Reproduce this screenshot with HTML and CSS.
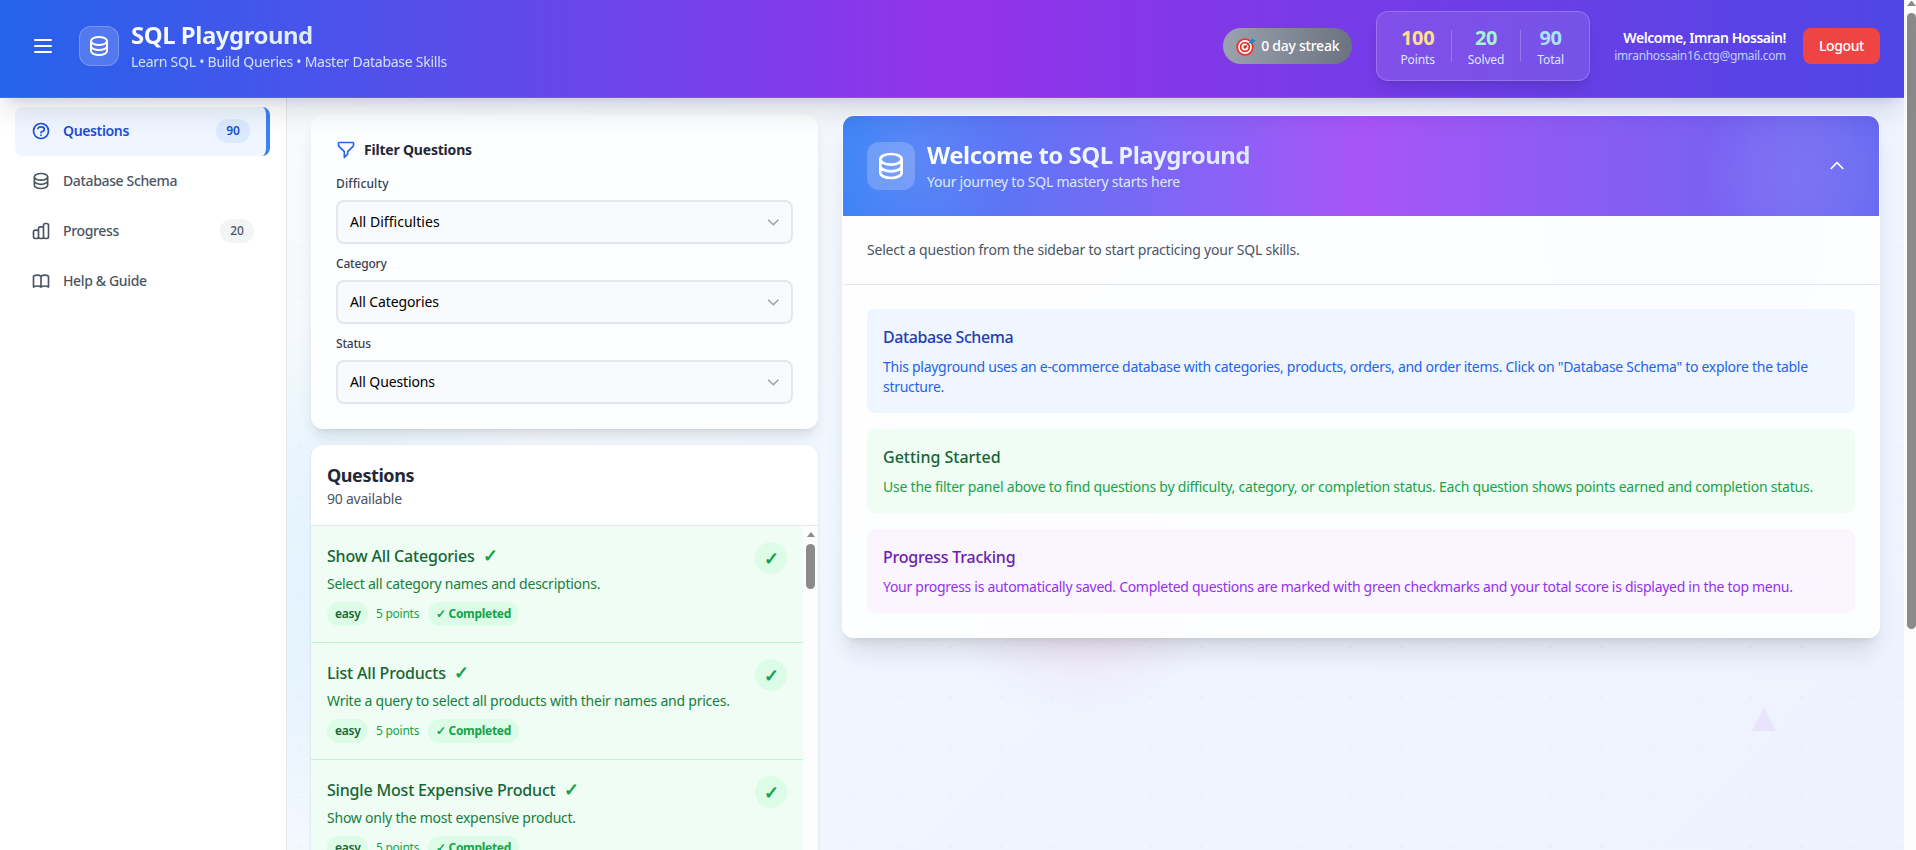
FILE: index.html
```html
<!DOCTYPE html>
<html lang="en">
<head>
<meta charset="utf-8">
<title>SQL Playground</title>
<link rel="stylesheet" href="styles.css">
</head>
<body>
<svg width="0" height="0" class="defs">
  <symbol id="db" viewBox="0 0 24 24"><path d="M4 7v10c0 2.21 3.582 4 8 4s8-1.79 8-4V7M4 7c0 2.21 3.582 4 8 4s8-1.79 8-4M4 7c0-2.21 3.582-4 8-4s8 1.79 8 4m0 5c0 2.21-3.582 4-8 4s-8-1.79-8-4"/></symbol>
  <symbol id="down" viewBox="0 0 20 20"><path d="M5.5 8l4.8 4.8L15 8"/></symbol>
</svg>
<div class="app">
  <div class="page">
    <header class="top">
      <svg class="icon menu" viewBox="0 0 24 24"><path d="M4 6h16M4 12h16M4 18h16"/></svg>
      <div class="logo"><svg class="icon i24"><use href="#db"/></svg></div>
      <div class="brand">
        <h1>SQL Playground</h1>
        <p>Learn SQL • Build Queries • Master Database Skills</p>
      </div>
      <div class="streak">
        <svg class="target" viewBox="0 0 20 20"><circle cx="9" cy="11" r="8.8" fill="#e8362c"/><circle cx="9" cy="11" r="6.9" fill="#fff"/><circle cx="9" cy="11" r="5.3" fill="#e8362c"/><circle cx="9" cy="11" r="3.4" fill="#fff"/><circle cx="9" cy="11" r="1.8" fill="#e8362c"/><path d="M9 11l6-6" stroke="#8a4a2b" stroke-width="1"/><path d="M13.8 7.4l.2-2.6L17 2l.6 1.8 2 .6L16.6 7.2z" fill="#1b87c9"/></svg>
        <span>0 day streak</span>
      </div>
      <div class="stats">
        <div class="stat gold"><b>100</b><span>Points</span></div>
        <div class="stat mint"><b>20</b><span>Solved</span></div>
        <div class="stat sky"><b>90</b><span>Total</span></div>
      </div>
      <div class="user"><b>Welcome, Imran Hossain!</b><span>imranhossain16.ctg@gmail.com</span></div>
      <button class="logout">Logout</button>
    </header>
    <div class="body">
      <nav class="side">
        <a class="item active"><svg class="icon i20" viewBox="0 0 24 24"><path d="M8.228 9c.549-1.165 2.03-2 3.772-2 2.21 0 4 1.343 4 3 0 1.4-1.278 2.575-3.006 2.907-.542.104-.994.54-.994 1.093m0 3h.01M21 12a9 9 0 11-18 0 9 9 0 0118 0z"/></svg><span>Questions</span><em>90</em></a>
        <a class="item"><svg class="icon i20"><use href="#db"/></svg><span>Database Schema</span></a>
        <a class="item"><svg class="icon i20" viewBox="0 0 24 24"><path d="M9 19v-6a2 2 0 00-2-2H5a2 2 0 00-2 2v6a2 2 0 002 2h2a2 2 0 002-2zm0 0V9a2 2 0 012-2h2a2 2 0 012 2v10m-6 0a2 2 0 002 2h2a2 2 0 002-2m0 0V5a2 2 0 012-2h2a2 2 0 012 2v14a2 2 0 01-2 2h-2a2 2 0 01-2-2z"/></svg><span>Progress</span><em>20</em></a>
        <a class="item"><svg class="icon i20" viewBox="0 0 24 24"><path d="M12 6.253v13m0-13C10.832 5.477 9.246 5 7.5 5S4.168 5.477 3 6.253v13C4.168 18.477 5.754 18 7.5 18s3.332.477 4.5 1.253m0-13C13.168 5.477 14.754 5 16.5 5c1.747 0 3.332.477 4.5 1.253v13C19.832 18.477 18.247 18 16.5 18c-1.746 0-3.332.477-4.5 1.253"/></svg><span>Help &amp; Guide</span></a>
      </nav>
      <main class="canvas">
        <i class="glow lilac"></i><i class="glow pink"></i><i class="ring"></i>
        <svg class="tri" viewBox="0 0 24 24"><path d="M12 0l12 24H0z"/></svg>
        <div class="left">
          <section class="filter">
            <h2><svg class="icon i20" viewBox="0 0 24 24"><path d="M3 4a1 1 0 011-1h16a1 1 0 011 1v2.586a1 1 0 01-.293.707l-6.414 6.414a1 1 0 00-.293.707V17l-4 4v-6.586a1 1 0 00-.293-.707L3.293 7.293A1 1 0 013 6.586V4z"/></svg>Filter Questions</h2>
            <label>Difficulty</label>
            <div class="select diff"><span>All Difficulties</span><svg><use href="#down"/></svg></div>
            <label class="cat">Category</label>
            <div class="select"><span>All Categories</span><svg><use href="#down"/></svg></div>
            <label class="cat">Status</label>
            <div class="select"><span>All Questions</span><svg><use href="#down"/></svg></div>
          </section>
          <section class="questions">
            <div class="qhead"><h2>Questions</h2><p>90 available</p></div>
            <div class="qbody">
              <div class="list">
                <article><div><h3>Show All Categories <i>✓</i></h3><p>Select all category names and descriptions.</p><div class="tags"><b>easy</b><span>5 points</span><strong>✓ Completed</strong></div></div><div class="tick">✓</div></article>
                <article><div><h3>List All Products <i>✓</i></h3><p>Write a query to select all products with their names and prices.</p><div class="tags"><b>easy</b><span>5 points</span><strong>✓ Completed</strong></div></div><div class="tick">✓</div></article>
                <article><div><h3>Single Most Expensive Product <i>✓</i></h3><p>Show only the most expensive product.</p><div class="tags"><b>easy</b><span>5 points</span><strong>✓ Completed</strong></div></div><div class="tick">✓</div></article>
              </div>
              <div class="track"><i class="arrow"></i><i class="thumb"></i></div>
            </div>
          </section>
        </div>
        <section class="welcome">
          <div class="hero">
            <div class="herobox"><svg class="icon i32"><use href="#db"/></svg></div>
            <div class="herotext"><h2>Welcome to SQL Playground</h2><p>Your journey to SQL mastery starts here</p></div>
            <svg class="icon i20 up" viewBox="0 0 24 24"><path d="M5 15l7-7 7 7"/></svg>
          </div>
          <p class="intro">Select a question from the sidebar to start practicing your SQL skills.</p>
          <div class="notes">
            <div class="note blue"><h3>Database Schema</h3><p>This playground uses an e-commerce database with categories, products, orders, and order items. Click on "Database Schema" to explore the table structure.</p></div>
            <div class="note green"><h3>Getting Started</h3><p>Use the filter panel above to find questions by difficulty, category, or completion status. Each question shows points earned and completion status.</p></div>
            <div class="note purple"><h3>Progress Tracking</h3><p>Your progress is automatically saved. Completed questions are marked with green checkmarks and your total score is displayed in the top menu.</p></div>
          </div>
        </section>
      </main>
    </div>
  </div>
  <div class="scroll"><i class="arrow"></i><i class="thumb"></i></div>
</div>
</body>
</html>
```
FILE: styles.css
```css
* { box-sizing: border-box; margin: 0; padding: 0; }
body { height: 850px; overflow: hidden; font: 400 14px/20px "Noto Sans", "Open Sans", sans-serif; letter-spacing: -0.23px; color: #1f2937; }
.defs { display: none; }
i, em { font-style: normal; }
.app { display: flex; height: 850px; overflow: hidden; }
.page { width: 1904px; display: flex; flex-direction: column; }
.icon { fill: none; stroke: currentColor; stroke-width: 2; stroke-linecap: round; stroke-linejoin: round; flex: none; }
.i20 { width: 20px; height: 20px; }
.i24 { width: 24px; height: 24px; }
.i32 { width: 32px; height: 32px; }

/* Header */
.top { position: relative; z-index: 5; height: 98px; flex: none; display: flex; align-items: center; padding: 0 24px 5px 31px; color: #fff; background: linear-gradient(90deg, #2563eb, #9333ea 50%, #4f46e5); border-bottom: 1px solid rgba(255,255,255,.1); background-origin: border-box; box-shadow: 0 20px 25px -5px rgba(0,0,0,.1), 0 8px 10px -6px rgba(0,0,0,.1); }
.menu { width: 24px; height: 24px; }
.logo { width: 40px; height: 40px; margin: 0 12px 0 24px; display: flex; align-items: center; justify-content: center; border-radius: 12px; border: 1px solid rgba(255,255,255,.22); background: rgba(255,255,255,.17); }
.brand { flex: 1; margin-top: -1px; }
.brand h1 { font-size: 24px; line-height: 32px; letter-spacing: -.5px; margin-bottom: 1px; background: linear-gradient(90deg, #fff, #dbeafe) 0 0 / 190px 100%; -webkit-background-clip: text; background-clip: text; color: transparent; }
.brand p { color: #dbeafe; letter-spacing: -.26px; opacity: .93; }
.streak { width: 129px; height: 36px; display: flex; align-items: center; padding-left: 13px; gap: 5px; border-radius: 18px; background: linear-gradient(90deg, #9ca3af, #6b7280); font-weight: 500; letter-spacing: -.25px; }
.target { width: 20px; height: 20px; flex: none; }
.stats { width: 214px; height: 70px; margin: 0 24px; display: flex; justify-content: center; align-items: center; border: 1px solid rgba(255,255,255,.2); border-radius: 12px; background: rgba(255,255,255,.1); box-shadow: 0 10px 15px -3px rgba(0,0,0,.1), 0 4px 6px -4px rgba(0,0,0,.1); }
.stat { display: flex; flex-direction: column; align-items: center; position: relative; right: 1px; }
.stat + .stat { margin-left: 33px; }
.stat + .stat::before { content: ""; position: absolute; left: -17px; top: 6px; width: 1px; height: 32px; background: rgba(255,255,255,.22); }
.stat b { font-size: 20px; line-height: 28px; letter-spacing: -.3px; }
.stat span { font-size: 12px; line-height: 16px; letter-spacing: -.12px; color: #dbeafe; }
.gold b { color: #fde08f; }
.mint b { color: #a7f3d0; }
.sky b { color: #a9e3fb; }
.user { display: flex; flex-direction: column; align-items: flex-end; margin-right: 17px; }
.user b { font-weight: 600; letter-spacing: -.46px; }
.user span { font-size: 12px; line-height: 16px; letter-spacing: -.32px; color: #bfd0fe; }
.logout { width: 77px; height: 36px; border: 0; border-radius: 8px; background: #ef4444; color: #fff; font: 500 14px/20px "Noto Sans", sans-serif; letter-spacing: -.36px; }

/* Sidebar */
.body { flex: 1; display: flex; min-height: 0; }
.side { width: 287px; flex: none; background: #fff; border-right: 1px solid #e5e7eb; padding: 9px 16px 0 15px; display: flex; flex-direction: column; gap: 2px; }
.item { height: 48px; flex: none; display: flex; align-items: center; padding: 0 16px; border-radius: 8px; color: #4b5563; font-weight: 550; letter-spacing: -.36px; }
.item span { flex: 1; margin-left: 12px; }
.item em { height: 24px; width: 34px; text-align: center; border-radius: 12px; background: #f3f4f6; font-size: 12px; line-height: 24px; letter-spacing: 0; }
.active { height: 49px; margin-bottom: -1px; padding-bottom: 2px; border-right: 4px solid #3b82f6; background: #eff6ff; color: #1d4ed8; font-weight: 600; }
.active em { background: #dbeafe; }

/* Content canvas */
.canvas { position: relative; flex: 1; overflow: hidden; display: flex; align-items: flex-start; gap: 24px; padding: 17px 24px 0;
  background: radial-gradient(circle at 14px 49px, rgba(99,102,241,.06) 0 1px, transparent 1.5px) 0 0 / 50px 50px,
    radial-gradient(circle 260px at 20px 480px, rgba(186,230,253,.28), rgba(186,230,253,.2) 50%, transparent),
    linear-gradient(135deg, #f8fafc, #eff6ff 50%, #eef2ff); }
.left { width: 507px; flex: none; position: relative; display: flex; flex-direction: column; gap: 16px; }
.glow { position: absolute; border-radius: 50%; }
.lilac { left: 1258px; top: 2px; width: 280px; height: 280px; background: linear-gradient(transparent 40px, rgba(165,180,252,.14) 100px); }
.pink { left: 655px; top: 346px; width: 280px; height: 280px; background: radial-gradient(closest-side, rgba(244,180,225,.34), transparent); }
.ring { position: absolute; left: 1335px; top: 135px; width: 43px; height: 43px; border-radius: 50%; border: 6px solid rgba(165,180,252,.14); }
.tri { position: absolute; left: 1465px; top: 609px; width: 24px; height: 24px; fill: #e9e3fd; }

.filter { height: 314px; border-radius: 12px; border: 1px solid rgba(255,255,255,.5); background: #fdfeff; padding: 24px; box-shadow: 0 10px 15px -3px rgba(0,0,0,.1), 0 4px 6px -4px rgba(0,0,0,.1); }
.filter h2 { display: flex; align-items: center; gap: 8px; font-size: 14px; line-height: 20px; font-weight: 700; letter-spacing: -.2px; margin-bottom: 16px; }
.filter h2 .icon { color: #2563eb; }
.filter label { display: block; font-size: 12px; line-height: 16px; font-weight: 550; color: #374151; margin-bottom: 8px; letter-spacing: .12px; }
.filter .cat { letter-spacing: -.2px; }
.select { height: 44px; display: flex; align-items: center; justify-content: space-between; padding: 0 7px 0 12px; margin-bottom: 12px; border: 2px solid #e5e7eb; border-radius: 8px; background: #f9fafb; color: #000; letter-spacing: -.12px; }
.select.diff { letter-spacing: .03px; }
.select svg { width: 20px; height: 20px; margin-right: 1px; fill: none; stroke: #9ca3af; stroke-width: 1.5; stroke-linecap: round; stroke-linejoin: round; }

.questions { border-radius: 12px; overflow: hidden; background: #fff; box-shadow: 0 1px 3px rgba(0,0,0,.12); }
.qhead { padding: 16px; border-bottom: 1px solid #e5e7eb; }
.qhead h2 { font-size: 18px; line-height: 28px; letter-spacing: -.43px; }
.qhead p { color: #4b5563; }
.qbody { display: flex; }
.list { flex: 1; }
article { display: flex; justify-content: space-between; height: 117px; padding: 16px; background: #f0fdf4; border-bottom: 1px solid #bbf7d0; }
h3 { font-size: 16px; font-weight: 550; }
article h3 { height: 28px; line-height: 28px; letter-spacing: -.18px; color: #166534; }
article h3 i { margin-left: 4px; font-size: 18px; line-height: 0; font-weight: 700; color: #16a34a; }
article p { margin: 4px 0 8px; color: #15803d; }
.tags { display: flex; align-items: center; gap: 8px; font-size: 12px; line-height: 16px; color: #16a34a; letter-spacing: -.26px; }
.tags b, .tags strong { padding: 4px 8px; border-radius: 12px; background: #dcfce7; }
.tags b { width: 41px; font-weight: 600; color: #166534; }
.tags strong { letter-spacing: -.3px; width: 91px; white-space: nowrap; }
.tags span { width: 44px; white-space: nowrap; }
.tick { width: 32px; height: 32px; flex: none; border-radius: 50%; background: #dcfce7; color: #16a34a; font-size: 18px; font-weight: 700; line-height: 32px; text-align: center; letter-spacing: 0; }
.track { width: 15px; background: #fcfcfc; display: flex; flex-direction: column; align-items: center; padding-top: 6px; }
.arrow { border: 4.5px solid transparent; border-top: 0; border-bottom: 5px solid #8b8b8b; }
.thumb { width: 9px; border-radius: 5px; background: #8b8b8b; }
.track .thumb { height: 45px; margin-top: 7px; }

/* Welcome panel */
.welcome { position: relative; flex: 1; border: 1px solid rgba(255,255,255,.6); border-radius: 12px; overflow: hidden; background: rgba(255,255,255,.87); box-shadow: 0 20px 25px -5px rgba(0,0,0,.1), 0 8px 10px -6px rgba(0,0,0,.1); }
.hero { height: 100px; display: flex; align-items: center; padding: 0 32px 0 24px; color: #fff; background: radial-gradient(circle 100px at 70px 44px, rgba(255,255,255,.09), transparent), radial-gradient(circle 105px at 962px 60px, rgba(255,255,255,.1), rgba(255,255,255,.07) 50%, transparent), linear-gradient(90deg, #3b82f6, #a855f7 50%, #6366f1); }
.herobox { width: 48px; height: 48px; display: flex; align-items: center; justify-content: center; border-radius: 12px; background: rgba(255,255,255,.2); }
.herotext { flex: 1; margin: -2px 0 0 12px; }
.herotext h2 { width: 326px; white-space: nowrap; font-size: 24px; line-height: 32px; letter-spacing: -.52px; background: linear-gradient(90deg, #fff, #dbeafe); -webkit-background-clip: text; background-clip: text; color: transparent; margin-bottom: 1px; }
.herotext p { color: #dbeafe; }
.intro { padding: 24px; border-bottom: 1px solid #e5e7eb; color: #4b5563; letter-spacing: -.21px; }
.notes { padding: 24px; display: flex; flex-direction: column; gap: 16px; }
.note { padding: 16px; border-radius: 8px; }
.note h3 { line-height: 24px; letter-spacing: -.42px; margin-bottom: 8px; }
.blue { background: #eff6ff; color: #2563eb; letter-spacing: -.28px; }
.blue h3 { color: #1e40af; }
.green { background: #f0fdf4; color: #16a34a; letter-spacing: -.22px; }
.green h3 { color: #166534; letter-spacing: 0; }
.purple { background: #faf5ff; color: #9333ea; letter-spacing: -.29px; }
.purple h3 { color: #6b21a8; letter-spacing: -.22px; }

/* Window scrollbar */
.scroll { flex: 1; background: #fcfcfc; display: flex; flex-direction: column; padding: 1px 0 0 3px; overflow: hidden; }
.scroll .thumb { height: 616px; margin-top: 7px; }
```
